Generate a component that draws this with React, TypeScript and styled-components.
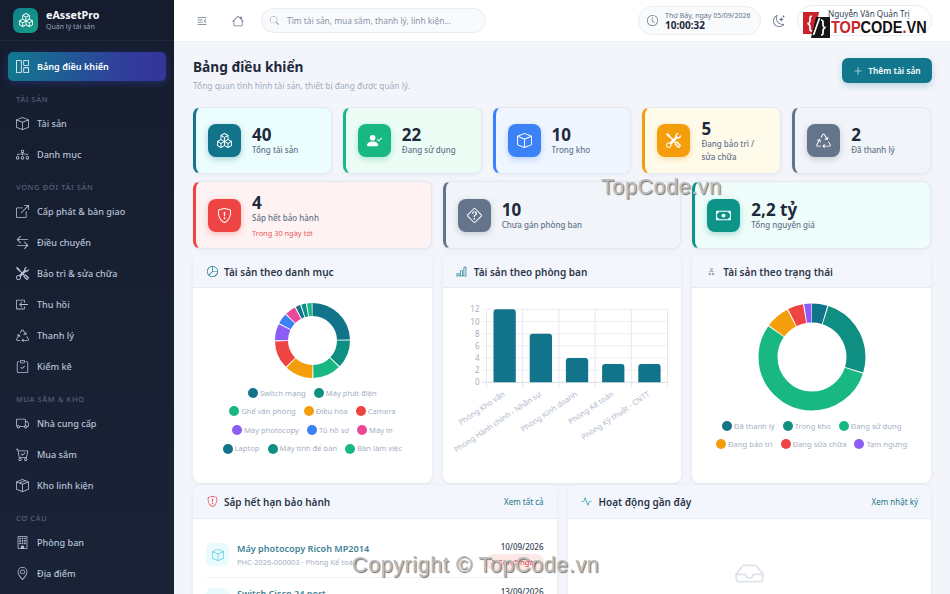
import React from "react";
import styled, { createGlobalStyle } from "styled-components";
import {
  BsBoxes, BsGrid1X2, BsBox, BsDiagram3, BsDiagram2, BsBoxArrowUpRight, BsArrowLeftRight, BsTools, BsBoxArrowInLeft,
  BsRecycle, BsClipboardCheck, BsTruck, BsCartCheck, BsBoxSeam, BsBuilding, BsGeoAlt, BsTextIndentRight, BsHouse,
  BsSearch, BsClock, BsMoonStars, BsPlusLg, BsPersonCheckFill, BsShieldExclamation, BsQuestionDiamond, BsCash,
  BsPieChart, BsBarChartLine, BsActivity, BsInbox,
} from "react-icons/bs";

const Global = createGlobalStyle`
  html, body { margin: 0; padding: 0; height: 100%; overflow: hidden; }
  body { font-family: "Noto Sans", "Liberation Sans", sans-serif; background: #f3f5fb; color: #1e293b; }
  * { box-sizing: border-box; }
`;

const Shell = styled.div`display: flex; height: 594px; width: 950px; overflow: hidden; position: relative;`;
const Sidebar = styled.aside`
  width: 174px; flex: none; height: 594px; overflow: hidden; color: #b6c2d6;
  background: linear-gradient(180deg, #151c2e 0%, #1a2336 100%);
`;
const Brand = styled.div`
  height: 41px; display: flex; align-items: center; gap: 8px; padding: 0 13px;
  border-bottom: 1px solid rgba(255,255,255,.05);
`;
const BrandMark = styled.div`
  width: 25px; height: 25px; border-radius: 7px; background: linear-gradient(135deg, #0f7f8c, #16a085);
  display: flex; align-items: center; justify-content: center; color: #fff; font-size: 14px; flex: none;
`;
const BrandText = styled.div`padding-top: 1px;`;
const BrandName = styled.div`font-size: 10.7px; font-weight: 700; color: #f8fafc; line-height: 13px;`;
const BrandSub = styled.div`font-size: 7px; color: #94a3b8; line-height: 10px;`;
const Nav = styled.nav`padding: 11px 8px 0; display: flex; flex-direction: column;`;
const NavItem = styled.div<{ $active?: boolean }>`
  height: 29px; flex: none; border-radius: 5px; display: flex; align-items: center; gap: 8px; padding: 0 9px 0 8px;
  font-size: 9.1px; font-weight: ${(p) => (p.$active ? 600 : 500)};
  color: ${(p) => (p.$active ? "#fff" : "#b6c2d6")};
  ${(p) => p.$active && "background: linear-gradient(90deg, #11798f 0%, #2f3f9b 70%, #36349a 100%); box-shadow: 0 2px 9px rgba(56,72,190,.4);"}
  svg { flex: none; width: 13px; height: 13px; }
`;
const NavGroup = styled.div`display: flex; flex-direction: column; gap: 2px;`;
const NavLabel = styled.div`
  font-size: 7.5px; letter-spacing: .6px; color: #536079; font-weight: 500; padding: 12.5px 8px 5.5px; line-height: 10px;
`;

const Main = styled.div`flex: 1; min-width: 0; display: flex; flex-direction: column; height: 594px;`;
const Topbar = styled.header`
  height: 41px; flex: none; background: #fff; display: flex; align-items: center; padding: 0 18px; gap: 8px; color: #64748b;
`;
const TopIcon = styled.div`width: 20px; display: flex; justify-content: center; font-size: 12px; margin-right: 8px;`;
const Search = styled.div`
  width: 225px; height: 25px; margin-left: -3px; border-radius: 13px; background: #f8fafc; border: 1px solid #e8edf4; display: flex; align-items: center; gap: 8px;
  padding: 0 10px 0 8px; font-size: 8.4px; color: #8a95a8; svg { font-size: 9px; color: #94a3b8; }
`;
const Spacer = styled.div`flex: 1;`;
const Clock = styled.div`
  width: 123px; height: 29px; border-radius: 15px; background: #f8fafc; border: 1px solid #e8edf4; display: flex; align-items: center; gap: 7px; padding: 0 8px;
  svg { font-size: 11px; color: #64748b; flex: none; }
`;
const ClockDate = styled.div`font-size: 7px; line-height: 9px; color: #64748b; white-space: nowrap;`;
const ClockTime = styled.div`font-size: 10px; line-height: 11px; color: #1e293b; font-weight: 700;`;
const Moon = styled.div`font-size: 12px; color: #64748b; width: 20px; display: flex; justify-content: center;`;
const UserPill = styled.div`
  width: 135px; height: 31px; border-radius: 16px; background: #fff; border: 1px solid #e8edf4; font-size: 8.2px; color: #334155; padding: 3px 0 0 30px; white-space: nowrap; line-height: 10px;
`;

const Content = styled.main`flex: 1; min-height: 0; overflow: hidden; padding: 15px 19px 0 19px; border-top: 1px solid #eef1f7;`;
const PageHead = styled.div`display: flex; justify-content: space-between; align-items: flex-start; height: 50px;`;
const PageTitle = styled.h1`font-size: 13.7px; line-height: 20px; margin: 0; font-weight: 700; color: #1e293b;`;
const PageSub = styled.p`font-size: 8.4px; line-height: 12px; margin: 3px 0 0; color: #a3aebf;`;
const AddButton = styled.button`
  width: 90px; height: 25px; margin: 1px -1px 0 0; border: 0; border-radius: 6px; background: #12778c; color: #fff; font: 600 8.4px "Noto Sans", sans-serif;
  display: flex; align-items: center; justify-content: center; gap: 5px; box-shadow: 0 3px 7px rgba(18,119,140,.25); svg { font-size: 10px; }
`;
const StatRow = styled.div<{ $cols: number; $after: number }>`
  display: grid; grid-template-columns: repeat(${(p) => p.$cols}, 1fr); gap: 11px; margin-bottom: ${(p) => p.$after}px;
`;
const StatCard = styled.div<{ $bg: string; $edge: string; $h: number }>`
  height: ${(p) => p.$h}px; border-radius: 8px; border: 1px solid #e3e9f3; border-left: 3px solid ${(p) => p.$edge}; background: ${(p) => p.$bg};
  display: flex; align-items: center; gap: 11px; padding: 0 12px; box-shadow: 0 1px 4px rgba(30,41,59,.05);
`;
const StatIcon = styled.div<{ $bg: string }>`
  width: 33px; height: 33px; border-radius: 8px; background: ${(p) => p.$bg}; color: #fff; flex: none; display: flex; align-items: center; justify-content: center; font-size: 15px;
  box-shadow: 0 2px 6px ${(p) => p.$bg}55;
`;
const StatText = styled.div`padding-top: 1px;`;
const StatValue = styled.div`font-size: 17px; line-height: 19px; font-weight: 700; color: #1e293b;`;
const StatLabel = styled.div`font-size: 8px; line-height: 12.5px; color: #64748b; font-weight: 500;`;
const StatNote = styled.div`font-size: 7.4px; line-height: 10px; margin-top: 3px; color: #e65b5b;`;

const ChartsRow = styled.div`display: grid; grid-template-columns: repeat(3, 1fr); gap: 11px; margin-bottom: 1.5px;`;
const Panel = styled.section<{ $h?: number }>`
  background: #fff; border-radius: 8px; overflow: hidden; box-shadow: 0 1px 4px rgba(30,41,59,.07); ${(p) => p.$h && `height: ${p.$h}px;`}
`;
const PanelHead = styled.div<{ $h: number }>`
  height: ${(p) => p.$h}px; background: #f4f6fd; border-bottom: 1px solid #e6eaf3; display: flex; align-items: center; gap: 6px; padding: 1px 13px 0;
`;
const PanelIcon = styled.div<{ $c: string; $s?: number }>`color: ${(p) => p.$c}; font-size: ${(p) => p.$s ?? 11}px; width: 12px; display: flex; justify-content: center;`;
const PanelTitle = styled.h2`font-size: 10px; margin: 0; font-weight: 600; color: #2b3648; flex: 1;`;
const PanelLink = styled.span`font-size: 8px; color: #1a7686;`;
const ChartBody = styled.div`display: flex; flex-direction: column; align-items: center; padding-top: 15px;`;
const ChartSvg = styled.svg`display: block; flex: none;`;
const Legend = styled.div`
  width: 192px; display: flex; flex-wrap: wrap; justify-content: center; column-gap: 8px; margin-top: 5.5px;
`;
const LegendItem = styled.div`display: flex; align-items: center; gap: 2px; font-size: 7.6px; line-height: 18.6px; color: #a5afc2; white-space: nowrap;`;
const Dot = styled.i<{ $c: string }>`width: 10px; height: 10px; border-radius: 50%; background: ${(p) => p.$c}; display: block;`;

const BottomRow = styled.div`display: grid; grid-template-columns: 1fr 1fr; gap: 11px;`;
const ListBody = styled.div`padding: 14px 13px 0;`;
const Row = styled.div`display: flex; align-items: flex-start; gap: 8px; height: 45px; padding-top: 9px; border-bottom: 1px solid #eef1f6;`;
const RowIcon = styled.div`width: 23px; height: 23px; margin-top: 1.5px; border-radius: 6px; background: #e9fbfd; color: #5fd0e0; display: flex; align-items: center; justify-content: center; font-size: 12px; flex: none;`;
const RowMain = styled.div`flex: 1; min-width: 0;`;
const RowName = styled.div`font-size: 9.1px; line-height: 13px; font-weight: 600; color: #3f8396;`;
const RowMeta = styled.div`font-size: 7.5px; line-height: 11px; color: #a5afc2; margin-top: 2px;`;
const RowSide = styled.div`display: flex; flex-direction: column; align-items: flex-end; margin-top: -1px;`;
const RowDate = styled.div`font-size: 8px; line-height: 11px; color: #334155; font-weight: 500;`;
const Badge = styled.div`
  font-size: 7.5px; line-height: 12px; height: 16px; padding: 2px 6px; margin-top: 2px; border-radius: 8px; background: #fde8e8; color: #dc3545; display: flex; align-items: center; gap: 3px;
  &::before { content: ""; width: 3px; height: 3px; border-radius: 50%; background: #b91c1c; }
`;
const EmptyState = styled.div`display: flex; justify-content: center; padding-top: 40px; font-size: 29px; color: #dfe3ea;`;

const Wm = styled.div<{ $x: number; $y: number }>`
  position: absolute; left: ${(p) => p.$x}px; top: ${(p) => p.$y}px; font: 400 21.5px "Liberation Sans", Arial, sans-serif; letter-spacing: .6px;
  color: #bdbdbd; text-shadow: 1px 1px 1px #6f6f6f; white-space: nowrap; pointer-events: none;
`;
const LogoWrap = styled.div`position: absolute; left: 803px; top: 12px; display: flex; align-items: center; gap: 1px; pointer-events: none;`;
const LogoText = styled.div`font: 700 16.5px/24px "Liberation Sans", Arial, sans-serif; color: #111; transform: scaleX(.88); transform-origin: left; white-space: nowrap; margin-top: 2px;`;
const LogoAccent = styled.span`color: #c9242b;`;

const Donut = ({ size, r, w, data }: { size: number; r: number; w: number; data: [number, string][] }) => {
  const total = data.reduce((s, d) => s + d[0], 0);
  const c = 2 * Math.PI * r;
  let acc = 0;
  return (
    <ChartSvg width={size} height={size} viewBox={`0 0 ${size} ${size}`}>
      {data.map(([v, col], i) => {
        const len = (v / total) * c;
        const el = (
          <circle key={i} cx={size / 2} cy={size / 2} r={r} fill="none" stroke={col} strokeWidth={w}
            strokeDasharray={`${Math.max(len - 1, 0.1)} ${c}`} strokeDashoffset={-acc} transform={`rotate(-90 ${size / 2} ${size / 2})`} />
        );
        acc += len;
        return el;
      })}
    </ChartSvg>
  );
};

const BarChart = () => {
  const vals = [12, 8, 4, 3, 3];
  const names = ["Phòng Kho vận", "Phòng Hành chính - Nhân sự", "Phòng Kinh doanh", "Phòng Kế toán", "Phòng Kỹ thuật - CNTT"];
  const x0 = 36.5, step = 36.2, y0 = 79.3, unit = 6.08;
  return (
    <ChartSvg width={224} height={170} viewBox="0 0 224 170">
      {[0, 2, 4, 6, 8, 10, 12].map((t) => (
        <g key={t}>
          <line x1={x0 - 4} x2={x0 + 181} y1={y0 - t * unit} y2={y0 - t * unit} stroke={t === 0 ? "#d9dde5" : "#eceef3"} />
          <text x={x0 - 7} y={y0 - t * unit + 3} textAnchor="end" fontSize="8" fill="#a7afbd" fontFamily="Noto Sans">{t}</text>
        </g>
      ))}
      {[0, 1, 2, 3, 4, 5].map((i) => (
        <line key={i} x1={x0 + i * step} x2={x0 + i * step} y1={y0 - 12 * unit} y2={y0 + 5} stroke="#e6e8ee" />
      ))}
      {vals.map((v, i) => {
        const x = x0 + i * step + 7, w = 22.3, h = v * unit, y = y0 - h;
        return <path key={i} d={`M${x} ${y0}V${y + 3}q0-3 3-3h${w - 6}q3 0 3 3V${y0}z`} fill="#12748b" />;
      })}
      {names.map((n, i) => (
        <text key={n} x={x0 + i * step + 19} y={y0 + 13} textAnchor="end" fontSize="7.6" fill="#b0b9ca" fontFamily="Noto Sans"
          transform={`rotate(-34 ${x0 + i * step + 19} ${y0 + 13})`}>{n}</text>
      ))}
    </ChartSvg>
  );
};

const TopLogo = () => (
  <LogoWrap>
    <svg width="27" height="27" viewBox="0 0 27 27">
      <path d="M0 0h16l-1 5-4 17H0z" fill="#c9242b" />
      <path d="M13 5h14v21H8z" fill="#151515" />
      <path d="M9 4C6.5 4 7 6 7 8.5S6.5 11 4.5 11.5C6.500 12 7 13 7 15s-.5 4 2 4" fill="none" stroke="#fff" strokeWidth="1.7" />
      <path d="M18 8c2.500 0 2 2 2 4.500s.5 2.500 2.500 3c-2 .5-2.500 1.500-2.500 3.500s.5 4-2 4" fill="none" stroke="#fff" strokeWidth="1.700" />
      <path d="M16.500 6 10.500 23" fill="none" stroke="#fff" strokeWidth="1.700" />
    </svg>
    <LogoText><LogoAccent>TOP</LogoAccent>CODE<LogoAccent>.</LogoAccent>VN</LogoText>
  </LogoWrap>
);

const catData: [number, string][] = [
  [10, "#12748b"], [5, "#0f8f82"], [5, "#19b883"], [5, "#f59e0b"], [5, "#ef4444"], [3, "#8b5cf6"], [2, "#3b82f6"], [2, "#ec4899"], [1, "#12748b"], [1, "#0f8f82"], [1, "#19b883"],
];
const statusData: [number, string][] = [
  [2, "#12748b"], [10, "#0f8f82"], [22, "#19b883"], [3, "#f59e0b"], [2, "#ef4444"], [1, "#8b5cf6"],
];
const catLegend: [string, string][] = [
  ["Switch mạng", "#12748b"], ["Máy phát điện", "#0f8f82"], ["Ghế văn phòng", "#19b883"], ["Điều hòa", "#f59e0b"], ["Camera", "#ef4444"],
  ["Máy photocopy", "#8b5cf6"], ["Tủ hồ sơ", "#3b82f6"], ["Máy in", "#ec4899"], ["Laptop", "#12748b"], ["Máy tính để bàn", "#0f8f82"], ["Bàn làm việc", "#19b883"],
];
const statusLegend: [string, string][] = [
  ["Đã thanh lý", "#12748b"], ["Trong kho", "#0f8f82"], ["Đang sử dụng", "#19b883"], ["Đang bảo trì", "#f59e0b"], ["Đang sửa chữa", "#ef4444"], ["Tạm ngưng", "#8b5cf6"],
];

const groups: { label: string; items: [React.ReactNode, string][] }[] = [
  { label: "TÀI SẢN", items: [[<BsBox />, "Tài sản"], [<BsDiagram3 />, "Danh mục"]] },
  { label: "VÒNG ĐỜI TÀI SẢN", items: [[<BsBoxArrowUpRight />, "Cấp phát & bàn giao"], [<BsArrowLeftRight />, "Điều chuyển"], [<BsTools />, "Bảo trì & sửa chữa"], [<BsBoxArrowInLeft />, "Thu hồi"], [<BsRecycle />, "Thanh lý"], [<BsClipboardCheck />, "Kiểm kê"]] },
  { label: "MUA SẮM & KHO", items: [[<BsTruck />, "Nhà cung cấp"], [<BsCartCheck />, "Mua sắm"], [<BsBoxSeam />, "Kho linh kiện"]] },
  { label: "CƠ CẤU", items: [[<BsBuilding />, "Phòng ban"], [<BsGeoAlt />, "Địa điểm"]] },
];

const Stat = ({ h, bg, edge, iconBg, icon, value, label, note }: { h: number; bg: string; edge: string; iconBg: string; icon: React.ReactNode; value: string; label: React.ReactNode; note?: string }) => (
  <StatCard $h={h} $bg={bg} $edge={edge}>
    <StatIcon $bg={iconBg}>{icon}</StatIcon>
    <StatText>
      <StatValue>{value}</StatValue>
      <StatLabel>{label}</StatLabel>
      {note && <StatNote>{note}</StatNote>}
    </StatText>
  </StatCard>
);

export default function App() {
  return (
    <Shell>
      <Global />
      <Sidebar>
        <Brand>
          <BrandMark><BsBoxes /></BrandMark>
          <BrandText><BrandName>eAssetPro</BrandName><BrandSub>Quản lý tài sản</BrandSub></BrandText>
        </Brand>
        <Nav>
          <NavItem $active><BsGrid1X2 />Bảng điều khiển</NavItem>
          {groups.map((g) => (
            <React.Fragment key={g.label}>
              <NavLabel>{g.label}</NavLabel>
              <NavGroup>
                {g.items.map(([icon, text]) => <NavItem key={text}>{icon}{text}</NavItem>)}
              </NavGroup>
            </React.Fragment>
          ))}
        </Nav>
      </Sidebar>
      <Main>
        <Topbar>
          <TopIcon><BsTextIndentRight /></TopIcon>
          <TopIcon><BsHouse /></TopIcon>
          <Search><BsSearch />Tìm tài sản, mua sắm, thanh lý, linh kiện...</Search>
          <Spacer />
          <Clock><BsClock /><div><ClockDate>Thứ Bảy, ngày 05/09/2026</ClockDate><ClockTime>10:00:32</ClockTime></div></Clock>
          <Moon><BsMoonStars /></Moon>
          <UserPill>Nguyễn Văn Quản Trị</UserPill>
        </Topbar>
        <Content>
          <PageHead>
            <div><PageTitle>Bảng điều khiển</PageTitle><PageSub>Tổng quan tình hình tài sản, thiết bị đang được quản lý.</PageSub></div>
            <AddButton><BsPlusLg />Thêm tài sản</AddButton>
          </PageHead>
          <StatRow $cols={5} $after={7}>
            <Stat h={67} bg="#ecfdfe" edge="#12748b" iconBg="#12748b" icon={<BsBoxes />} value="40" label="Tổng tài sản" />
            <Stat h={67} bg="#ecfdf5" edge="#19b883" iconBg="#19b883" icon={<BsPersonCheckFill />} value="22" label="Đang sử dụng" />
            <Stat h={67} bg="#eff6ff" edge="#3b82f6" iconBg="#3b82f6" icon={<BsBox />} value="10" label="Trong kho" />
            <Stat h={67} bg="#fffbeb" edge="#f59e0b" iconBg="#f59e0b" icon={<BsTools />} value="5" label={<>Đang bảo trì /<br />sửa chữa</>} />
            <Stat h={67} bg="#f1f5f9" edge="#64748b" iconBg="#64748b" icon={<BsRecycle />} value="2" label="Đã thanh lý" />
          </StatRow>
          <StatRow $cols={3} $after={6}>
            <Stat h={68} bg="#fef2f2" edge="#ef4444" iconBg="#ef4444" icon={<BsShieldExclamation />} value="4" label="Sắp hết bảo hành" note="Trong 30 ngày tới" />
            <Stat h={68} bg="#f1f5f9" edge="#64748b" iconBg="#64748b" icon={<BsQuestionDiamond />} value="10" label="Chưa gán phòng ban" />
            <Stat h={68} bg="#effdfa" edge="#0d9488" iconBg="#0d9488" icon={<BsCash />} value="2,2 tỷ" label="Tổng nguyên giá" />
          </StatRow>
          <ChartsRow>
            <Panel $h={228}>
              <PanelHead $h={33}><PanelIcon $c="#12748b"><BsPieChart /></PanelIcon><PanelTitle>Tài sản theo danh mục</PanelTitle></PanelHead>
              <ChartBody>
                <Donut size={75} r={31} w={13} data={catData} />
                <Legend>{catLegend.map(([t, c]) => <LegendItem key={t}><Dot $c={c} />{t}</LegendItem>)}</Legend>
              </ChartBody>
            </Panel>
            <Panel $h={228}>
              <PanelHead $h={33}><PanelIcon $c="#12748b"><BsBarChartLine /></PanelIcon><PanelTitle>Tài sản theo phòng ban</PanelTitle></PanelHead>
              <ChartBody><BarChart /></ChartBody>
            </Panel>
            <Panel $h={228}>
              <PanelHead $h={33}><PanelIcon $c="#5f8a97" $s={9}><BsDiagram2 /></PanelIcon><PanelTitle>Tài sản theo trạng thái</PanelTitle></PanelHead>
              <ChartBody>
                <Donut size={108} r={44} w={19} data={statusData} />
                <Legend>{statusLegend.map(([t, c]) => <LegendItem key={t}><Dot $c={c} />{t}</LegendItem>)}</Legend>
              </ChartBody>
            </Panel>
          </ChartsRow>
          <BottomRow>
            <Panel>
              <PanelHead $h={34}><PanelIcon $c="#ef4444"><BsShieldExclamation /></PanelIcon><PanelTitle>Sắp hết hạn bảo hành</PanelTitle><PanelLink>Xem tất cả</PanelLink></PanelHead>
              <ListBody>
                <Row>
                  <RowIcon><BsBox /></RowIcon>
                  <RowMain><RowName>Máy photocopy Ricoh MP2014</RowName><RowMeta>PHC-2026-000003 · Phòng Kế toán</RowMeta></RowMain>
                  <RowSide><RowDate>10/09/2026</RowDate><Badge>Còn 5 ngày</Badge></RowSide>
                </Row>
                <Row>
                  <RowIcon><BsBox /></RowIcon>
                  <RowMain><RowName>Switch Cisco 24 port</RowName></RowMain>
                  <RowSide><RowDate>13/09/2026</RowDate></RowSide>
                </Row>
              </ListBody>
            </Panel>
            <Panel>
              <PanelHead $h={34}><PanelIcon $c="#1a9bb0"><BsActivity /></PanelIcon><PanelTitle>Hoạt động gần đây</PanelTitle><PanelLink>Xem nhật ký</PanelLink></PanelHead>
              <EmptyState><BsInbox /></EmptyState>
            </Panel>
          </BottomRow>
        </Content>
      </Main>
      <TopLogo />
      <Wm $x={601} $y={175}>TopCode.vn</Wm>
      <Wm $x={352} $y={553}>Copyright © TopCode.vn</Wm>
    </Shell>
  );
}
